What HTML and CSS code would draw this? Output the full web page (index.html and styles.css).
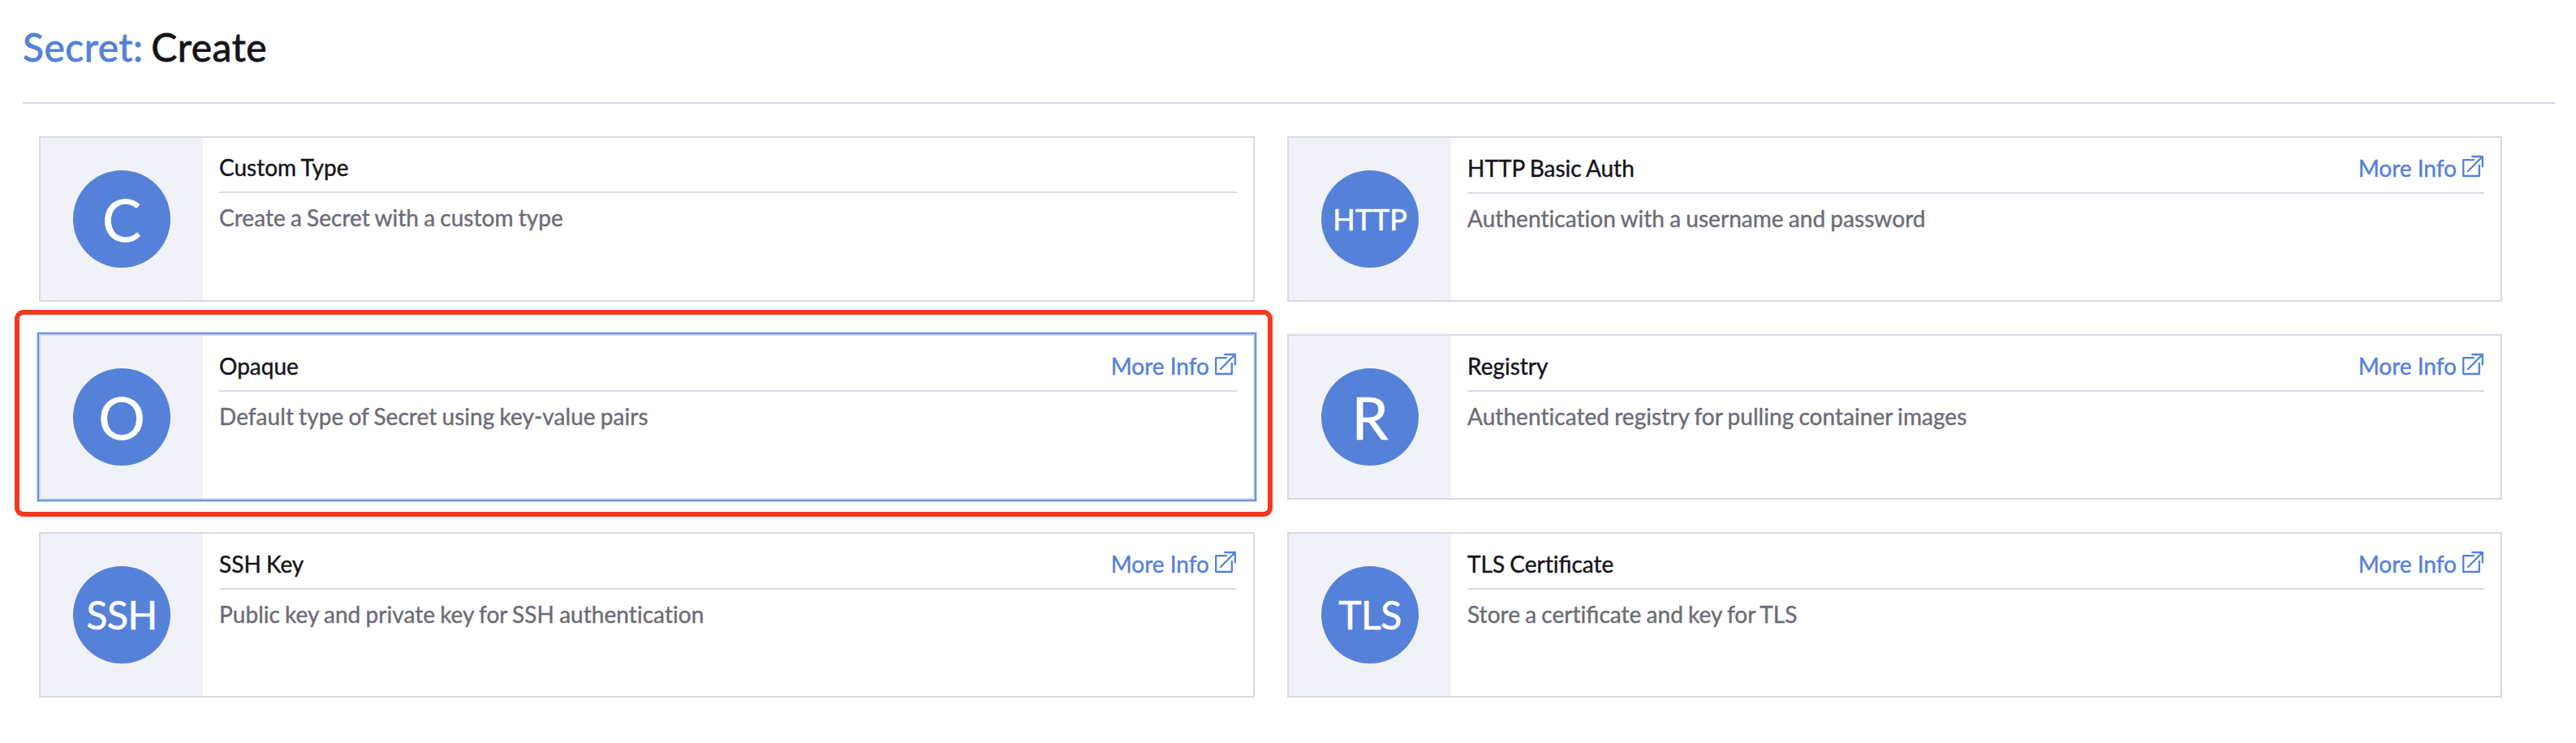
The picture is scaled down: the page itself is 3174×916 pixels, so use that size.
FILE: index.html
```html
<!DOCTYPE html>
<html lang="en">
<head>
<meta charset="utf-8">
<title>Secret: Create</title>
<link rel="stylesheet" href="styles.css">
</head>
<body>
<svg class="sprite" aria-hidden="true">
  <symbol id="external" viewBox="0 0 28 28">
    <path d="M15 6.2H2.2V26H21.8V13M13.2 2H25.8V14.6M25.8 2L8 20" fill="none" stroke="currentColor" stroke-width="2.3" stroke-linecap="round" stroke-linejoin="round"/>
  </symbol>
</svg>
<header class="page-head">
  <h1 class="page-title"><span class="kind">Secret:</span> Create</h1>
</header>
<main class="grid">
  <section class="card">
    <div class="side"><div class="badge badge-lg">C</div></div>
    <div class="body">
      <div class="head plain"><span class="name">Custom Type</span></div>
      <p class="desc">Create a Secret with a custom type</p>
    </div>
  </section>
  <section class="card">
    <div class="side"><div class="badge badge-sm">HTTP</div></div>
    <div class="body">
      <div class="head"><span class="name">HTTP Basic Auth</span><a class="more">More Info<svg class="ext"><use href="#external"/></svg></a></div>
      <p class="desc">Authentication with a username and password</p>
    </div>
  </section>
  <section class="card focused">
    <div class="side"><div class="badge badge-lg">O</div></div>
    <div class="body">
      <div class="head"><span class="name">Opaque</span><a class="more">More Info<svg class="ext"><use href="#external"/></svg></a></div>
      <p class="desc">Default type of Secret using key-value pairs</p>
    </div>
    <div class="highlight"></div>
  </section>
  <section class="card">
    <div class="side"><div class="badge badge-lg">R</div></div>
    <div class="body">
      <div class="head"><span class="name">Registry</span><a class="more">More Info<svg class="ext"><use href="#external"/></svg></a></div>
      <p class="desc">Authenticated registry for pulling container images</p>
    </div>
  </section>
  <section class="card">
    <div class="side"><div class="badge badge-md">SSH</div></div>
    <div class="body">
      <div class="head"><span class="name">SSH Key</span><a class="more">More Info<svg class="ext"><use href="#external"/></svg></a></div>
      <p class="desc">Public key and private key for SSH authentication</p>
    </div>
  </section>
  <section class="card">
    <div class="side"><div class="badge badge-md">TLS</div></div>
    <div class="body">
      <div class="head"><span class="name">TLS Certi<span class="lig">fi</span>cate</span><a class="more">More Info<svg class="ext"><use href="#external"/></svg></a></div>
      <p class="desc">Store a certi<span class="lig">fi</span>cate and key for TLS</p>
    </div>
  </section>
</main>
</body>
</html>
```

FILE: styles.css
```css
* { box-sizing: border-box; }
body {
  margin: 0;
  padding: 0 26px 0 28px;
  background: #fff;
  color: #141419;
  font-family: Lato, sans-serif;
  font-size: 28px;
  line-height: 34px;
  font-variant-ligatures: none;
  -webkit-text-stroke: 0.4px currentColor;
}
.lig { font-variant-ligatures: common-ligatures; letter-spacing: 0; }
.sprite { position: absolute; width: 0; height: 0; }
.page-head {
  height: 128px;
  padding-top: 29px;
  border-bottom: 2px solid #d7dae4;
}
.page-title {
  margin: 0;
  font-size: 48px;
  font-weight: 400;
  line-height: 58px;
  letter-spacing: 0.5px;
  word-spacing: -3px;
  -webkit-text-stroke-width: 0.8px;
}
.kind { color: #5581d9; }
.grid {
  display: grid;
  grid-template-columns: 1498px 1497px;
  grid-auto-rows: 204px;
  gap: 40px;
  padding: 40px 0 0 20px;
}
.card {
  position: relative;
  display: flex;
  border: 2px solid #d7dae4;
}
.focused { box-shadow: 0 0 0 1px #5581d9, 0 0 0 2px #84a5e4, 0 0 0 3px #c3d2f1; }
.side {
  display: flex;
  flex: none;
  align-items: center;
  justify-content: center;
  width: 200px;
  background: #f1f2f8;
}
.badge {
  width: 120px;
  height: 120px;
  border-radius: 50%;
  background: #5581d9;
  color: #fff;
  line-height: 120px;
  text-align: center;
  -webkit-text-stroke-width: 0.6px;
}
.badge-lg { font-size: 72px; }
.badge-md { font-size: 48px; letter-spacing: -0.5px; }
.badge-sm { font-size: 36px; }
.body { flex: 1; padding: 20px; }
.head {
  display: flex;
  justify-content: space-between;
  height: 49px;
  border-bottom: 2px solid #d7dae4;
}
.plain { height: 48px; }
.name { word-spacing: -1px; }
.plain .name { margin-top: -1px; }
.more { display: flex; color: #5581d9; }
.ext { width: 28px; height: 28px; margin: 1px 0 0 6px; }
.desc {
  margin: 13px 0 0;
  color: #6c6c76;
  letter-spacing: 0.05px;
  word-spacing: -1.1px;
}
.highlight {
  position: absolute;
  inset: -32px -24px -23px -32px;
  border: 6px solid #f2391e;
  border-radius: 11px;
}
```
